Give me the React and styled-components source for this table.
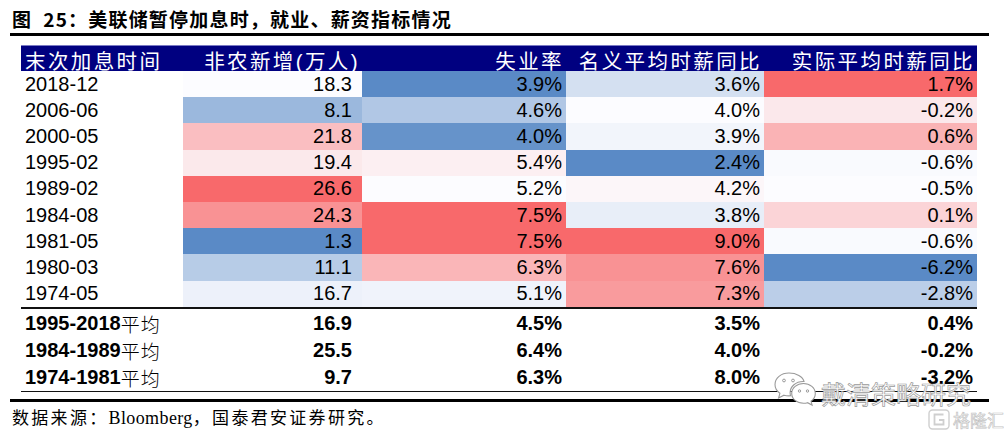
import React from 'react'
import styled, { createGlobalStyle } from 'styled-components'

const GlobalStyle = createGlobalStyle`
  html, body {
    margin: 0;
    padding: 0;
    background: #ffffff;
  }
`

const HEADERS = ['末次加息时间', '非农新增(万人)', '失业率', '名义平均时薪同比', '实际平均时薪同比']

const ROWS = [
  ['2018-12', 18.3, 3.9, 3.6, 1.7],
  ['2006-06', 8.1, 4.6, 4.0, -0.2],
  ['2000-05', 21.8, 4.0, 3.9, 0.6],
  ['1995-02', 19.4, 5.4, 2.4, -0.6],
  ['1989-02', 26.6, 5.2, 4.2, -0.5],
  ['1984-08', 24.3, 7.5, 3.8, 0.1],
  ['1981-05', 1.3, 7.5, 9.0, -0.6],
  ['1980-03', 11.1, 6.3, 7.6, -6.2],
  ['1974-05', 16.7, 5.1, 7.3, -2.8],
]

const SUMMARY = [
  ['1995-2018', '16.9', '4.5%', '3.5%', '0.4%'],
  ['1984-1989', '25.5', '6.4%', '4.0%', '-0.2%'],
  ['1974-1981', '9.7', '6.3%', '8.0%', '-3.2%'],
]

// excel style 3-colour scale: blue (min) -> white (median) -> red (max)
const WHITE = [252, 252, 255]
const BLUE = [90, 138, 198]
const RED = [248, 105, 107]

const mix = (a, b, t) =>
  `rgb(${a.map((c, i) => Math.round(c + (b[i] - c) * t)).join(',')})`

const scaleColor = (v, col) => {
  const vals = ROWS.map((r) => r[col]).sort((a, b) => a - b)
  const min = vals[0]
  const max = vals[vals.length - 1]
  const mid = vals[Math.floor(vals.length / 2)]
  if (v <= mid) return mix(WHITE, BLUE, mid === min ? 0 : (mid - v) / (mid - min))
  return mix(WHITE, RED, (v - mid) / (max - mid))
}

const fmt = (v, col) => (col === 1 ? v.toFixed(1) : `${v.toFixed(1)}%`)

const App = () => (
  <>
    <GlobalStyle />
    <Page>
      <Title>图&nbsp;&nbsp;25：美联储暂停加息时，就业、薪资指标情况</Title>
      <TopRule />
      <Table>
        <HeadRow>
          {HEADERS.map((h, i) => (
            <HeadCell key={h} $left={i === 0}>
              {h}
            </HeadCell>
          ))}
        </HeadRow>
        {ROWS.map((r) => (
          <DataRow key={r[0]}>
            <Cell $left>{r[0]}</Cell>
            {r.slice(1).map((v, i) => (
              <Cell key={i} $wide={i === 0} $bg={scaleColor(v, i + 1)}>
                {fmt(v, i + 1)}
              </Cell>
            ))}
          </DataRow>
        ))}
        <SummaryBlock>
          {SUMMARY.map((r) => (
            <SumRow key={r[0]}>
              <Cell $left>
                {r[0]}
                <Cjk>平均</Cjk>
              </Cell>
              {r.slice(1).map((v, i) => (
                <Cell key={i} $wide={i === 0}>
                  {v}
                </Cell>
              ))}
            </SumRow>
          ))}
        </SummaryBlock>
      </Table>
      <BottomRule />
      <Source>
        数据来源：<Latin>Bloomberg</Latin>，国泰君安证券研究。
      </Source>

      <Watermark>
        <svg width="44" height="40" viewBox="0 0 44 40">
          <path
            d="M16 3C8 3 2 8 2 14.5c0 3.6 1.9 6.7 4.9 8.8L5.6 28l5.4-2.8c1.6.5 3.2.7 5 .7.6 0 1.1 0 1.6-.1-.3-1-.5-2-.5-3.1 0-6.2 5.8-11.2 13-11.2h.9C29.8 6.6 23.5 3 16 3z"
            fill="#fff"
            stroke="#9a9a9a"
            strokeWidth="1.1"
          />
          <path
            d="M30.5 13.5c-6.5 0-11.8 4.4-11.8 9.9s5.3 9.9 11.8 9.9c1.4 0 2.8-.2 4-.6l4.6 2.4-1.1-4c2.6-1.8 4.3-4.6 4.3-7.7 0-5.5-5.3-9.9-11.8-9.9z"
            fill="#fff"
            stroke="#9a9a9a"
            strokeWidth="1.1"
          />
          <circle cx="11" cy="10.5" r="1.4" fill="none" stroke="#9a9a9a" />
          <circle cx="20" cy="10.5" r="1.4" fill="none" stroke="#9a9a9a" />
          <circle cx="26.5" cy="21" r="1.2" fill="none" stroke="#9a9a9a" />
          <circle cx="34.5" cy="21" r="1.2" fill="none" stroke="#9a9a9a" />
        </svg>
        <WmText>戴清策略研究</WmText>
      </Watermark>

      <Logo>
        <svg width="22" height="21" viewBox="0 0 22 21">
          <rect x="1" y="1" width="20" height="19" rx="3.5" fill="none" stroke="#cfcfcf" strokeWidth="1.4" />
          <path d="M15.5 5.5H6.5v10h9v-4.5h-4.5" fill="none" stroke="#cfcfcf" strokeWidth="1.8" />
        </svg>
        <LogoText>格隆汇</LogoText>
      </Logo>
    </Page>
  </>
)

export default App

const Page = styled.div`
  position: relative;
  width: 1004px;
  height: 436px;
  overflow: hidden;
  box-sizing: border-box;
  padding: 6px 15px 0 10px;
  display: flex;
  flex-direction: column;
  background: #fff;
`

const Title = styled.div`
  height: 25px;
  line-height: 25px;
  padding-left: 2px;
  font-family: 'Noto Sans CJK SC', 'Liberation Serif', sans-serif;
  font-weight: 700;
  font-size: 19px;
  letter-spacing: 1.2px;
  color: #000;
  white-space: nowrap;
`

const TopRule = styled.div`
  margin-top: 2px;
  height: 3px;
  background: #000;
`

const Table = styled.div`
  margin: 9px 0 0 11px;
  width: 956px;
  display: flex;
  flex-direction: column;
`

const Grid = styled.div`
  display: grid;
  grid-template-columns: 162px 179px 204px 198px 213px;
`

const HeadRow = styled(Grid)`
  height: 26px;
  background: #000080;
  box-shadow: inset 0 1px 0 #7a7ac4;
`

const HeadCell = styled.div`
  display: flex;
  align-items: center;
  justify-content: ${(p) => (p.$left ? 'flex-start' : 'flex-end')};
  padding: ${(p) => (p.$left ? '0 0 0 4px' : '0 2px 0 0')};
  font-family: 'Liberation Sans', 'Noto Sans CJK SC', sans-serif;
  font-size: 20.5px;
  letter-spacing: 2.4px;
  color: #fff;
  white-space: nowrap;
  overflow: visible;
`

const DataRow = styled(Grid)`
  height: 26.2px;
`

const SummaryBlock = styled.div`
  border-top: 2px solid #111;
  border-bottom: 1.5px solid #111;
  padding-top: 1px;
`

const SumRow = styled(Grid)`
  height: 27px;
  font-weight: 700;
`

const Cell = styled.div`
  display: flex;
  align-items: center;
  justify-content: ${(p) => (p.$left ? 'flex-start' : 'flex-end')};
  padding: ${(p) => (p.$left ? '0 0 0 4px' : p.$wide ? '0 10px 0 0' : '0 4px 0 0')};
  background: ${(p) => p.$bg || 'transparent'};
  font-family: 'Liberation Sans', Arial, sans-serif;
  font-size: 20px;
  color: #000;
  white-space: nowrap;
`

const Cjk = styled.span`
  font-family: 'Noto Sans CJK SC', sans-serif;
  font-weight: 300;
  font-size: 19px;
  letter-spacing: 1px;
`

const BottomRule = styled.div`
  margin-top: 7px;
  height: 3px;
  background: #000;
`

const Source = styled.div`
  margin-top: 5px;
  padding-left: 2px;
  font-family: 'Noto Sans CJK SC', 'Liberation Serif', sans-serif;
  font-size: 17px;
  letter-spacing: 2.3px;
  line-height: 20px;
  color: #000;
  white-space: nowrap;
`

const Latin = styled.span`
  font-family: 'Liberation Serif', serif;
  font-size: 18px;
  letter-spacing: 0.4px;
`

const Watermark = styled.div`
  position: absolute;
  left: 773px;
  top: 369px;
  display: flex;
  align-items: center;
  gap: 4px;
`

const WmText = styled.span`
  font-family: 'Noto Sans CJK SC', sans-serif;
  font-size: 25px;
  color: #fff;
  -webkit-text-stroke: 0.7px #9a9a9a;
  letter-spacing: 0;
  margin-top: 6px;
`

const Logo = styled.div`
  position: absolute;
  left: 928px;
  top: 407px;
  display: flex;
  align-items: center;
  gap: 3px;
`

const LogoText = styled.span`
  font-family: 'Noto Sans CJK SC', sans-serif;
  font-size: 17px;
  color: #fff;
  -webkit-text-stroke: 0.7px #c4c4c4;
`
